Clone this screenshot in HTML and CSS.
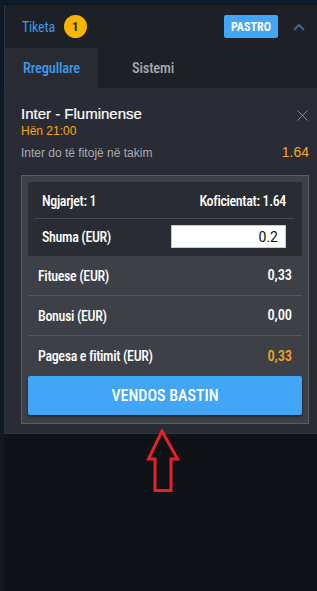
FILE: index.html
```html
<!DOCTYPE html>
<html>
<head>
<meta charset="utf-8">
<link rel="stylesheet" href="styles.css">
</head>
<body>
<div class="page">
  <div class="panel">
    <div class="header">
      <div class="title">Tiketa</div>
      <div class="badge">1</div>
      <div class="spacer"></div>
      <button class="clear">PASTRO</button>
      <svg class="chev" width="12" height="8" viewBox="0 0 12 8"><path d="M1 7 L6 2 L11 7" fill="none" stroke="#3c6a96" stroke-width="2"/></svg>
    </div>
    <div class="tabs">
      <div class="tab active">Rregullare</div>
      <div class="tab">Sistemi</div>
    </div>
    <div class="content">
      <div class="event">
        <div class="event-info">
          <div class="match">Inter - Fluminense</div>
          <div class="time">Hën 21:00</div>
        </div>
        <svg class="close" width="11" height="11" viewBox="0 0 11 11"><path d="M0.5 0.5 L10.5 10.5 M10.5 0.5 L0.5 10.5" stroke="#8a8c92" stroke-width="1"/></svg>
      </div>
      <div class="pick">
        <span class="pick-name">Inter do të fitojë në takim</span>
        <span class="pick-odd">1.64</span>
      </div>
      <div class="box">
        <div class="inner">
          <div class="irow sep">
            <span>Ngjarjet: 1</span>
            <span>Koficientat: 1.64</span>
          </div>
          <div class="irow stake">
            <span>Shuma (EUR)</span>
            <div class="input">0.2</div>
          </div>
        </div>
        <div class="orow sep2"><span>Fituese (EUR)</span><span>0,33</span></div>
        <div class="orow sep2"><span>Bonusi (EUR)</span><span>0,00</span></div>
        <div class="orow"><span>Pagesa e fitimit (EUR)</span><span class="gold">0,33</span></div>
        <button class="place">VENDOS BASTIN</button>
      </div>
    </div>
  </div>
  <svg class="arrow" width="40" height="70" viewBox="0 0 40 70"><polygon points="17,2 32.5,30 26,30 26,61.5 10,61.5 10,30 3.5,30" fill="none" stroke="#e8202a" stroke-width="3" stroke-linejoin="miter"/></svg>
</div>
</body>
</html>
```

FILE: styles.css
```css
* { box-sizing: border-box; }
html, body { margin: 0; padding: 0; }
body {
  background: #0f1216;
  font-family: Roboto, sans-serif;
  font-stretch: 80%;
  width: 317px;
  height: 591px;
  overflow: hidden;
}
.page {
  position: relative;
  height: 591px;
  border-top: 4px solid #0b1b2c;
  border-left: 4px solid #13181e;
  padding-top: 1px;
}
.panel {
  width: 313px;
  border-left: 1px solid #1b3c52;
  border-bottom: 1px solid #1b3c52;
  background: #2a2c35;
}
.header {
  height: 43px;
  background: #1e2027;
  display: flex;
  align-items: center;
  padding: 0 12px 0 17px;
}
.title {
  color: #3d9ae8;
  font-size: 14px;
  letter-spacing: -0.2px;
}
.badge {
  margin-left: 9px;
  width: 23px;
  height: 23px;
  border-radius: 50%;
  background: #f7b500;
  color: #1d2a20;
  font-size: 13px;
  font-weight: 700;
  display: flex;
  align-items: center;
  justify-content: center;
}
.spacer { flex: 1; }
.clear {
  background: #42a5f5;
  color: #fff;
  border: 0;
  border-radius: 2px;
  height: 23px;
  width: 54px;
  font-family: Roboto, sans-serif;
  font-stretch: 80%;
  font-weight: 700;
  font-size: 12px;
  letter-spacing: 0;
  padding: 0;
}
.chev { margin-left: 15px; }
.tabs {
  height: 40px;
  display: flex;
  background: #1e2027;
}
.tab {
  width: 93px;
  display: flex;
  align-items: center;
  justify-content: center;
  font-size: 14.5px;
  letter-spacing: -0.2px;
  color: #a7a9b0;
  font-weight: 500;
}
.tab.active {
  background: #292b33;
  color: #3d9ae8;
}
.tab + .tab { width: 120px; justify-content: flex-start; padding-left: 34px; }
.content {
  padding: 17px 8px 9px 16px;
  font-family: "Liberation Sans", Arial, sans-serif;
  font-stretch: 100%;
}
.event {
  display: flex;
  justify-content: space-between;
  align-items: flex-start;
}
.match {
  color: #fff;
  font-size: 15px;
  line-height: 17px;
  -webkit-text-stroke: 0.2px #fff;
}
.time {
  color: #f5a623;
  font-size: 12px;
  line-height: 15px;
  margin-top: 2px;
}
.close { margin-top: 5px; margin-right: 1px; }
.pick {
  display: flex;
  justify-content: space-between;
  align-items: baseline;
  margin-top: 3px;
}
.pick-name { color: #a9abb0; font-size: 12px; }
.pick-odd { color: #f5a623; font-size: 14px; margin-top: 2px; }
.box {
  margin-top: 15px;
  border: 1px solid #5b5d63;
  background: #3e4048;
  padding: 6px 6px 8px 6px;
  font-family: Roboto, sans-serif;
  font-stretch: 75%;
}
.inner {
  background: #2a2c34;
  padding: 0 16px 5px 14px;
  color: #fff;
  font-size: 14px;
  font-weight: 500;
  letter-spacing: -0.35px;
}
.irow {
  display: flex;
  justify-content: space-between;
  align-items: center;
}
.irow.sep {
  height: 37px;
  border-bottom: 1px solid #494b52;
  margin: 0 -8px;
  padding: 2px 8px 0 8px;
}
.irow.stake { height: 32px; padding-top: 3px; }
.input {
  width: 115px;
  height: 23px;
  background: #fff;
  color: #111;
  font-family: Roboto, "Liberation Sans", sans-serif;
  font-stretch: 100%;
  font-weight: 400;
  letter-spacing: 0;
  font-size: 14px;
  text-align: right;
  padding: 3px 7px 0 0;
  border: 1px solid #ccc;
}
.orow {
  display: flex;
  justify-content: space-between;
  align-items: center;
  height: 40px;
  padding: 0 10px 0 10px;
  color: #fff;
  font-size: 14px;
  font-weight: 500;
  letter-spacing: -0.35px;
}
.orow.sep2 { border-bottom: 1px solid #55575e; }
.orow span:last-child { font-size: 14.5px; letter-spacing: -0.1px; }
.gold { color: #f5a623; }
.place {
  margin-top: 0;
  width: 100%;
  height: 39px;
  border: 0;
  border-radius: 2px;
  background: #42a5f5;
  color: #fff;
  font-family: Roboto, sans-serif;
  font-stretch: 80%;
  font-size: 16px;
  font-weight: 500;
  letter-spacing: 0;
  box-shadow: 0 2px 3px rgba(0,0,0,0.45);
}
.arrow {
  position: absolute;
  left: 141px;
  top: 425px;
}
```
